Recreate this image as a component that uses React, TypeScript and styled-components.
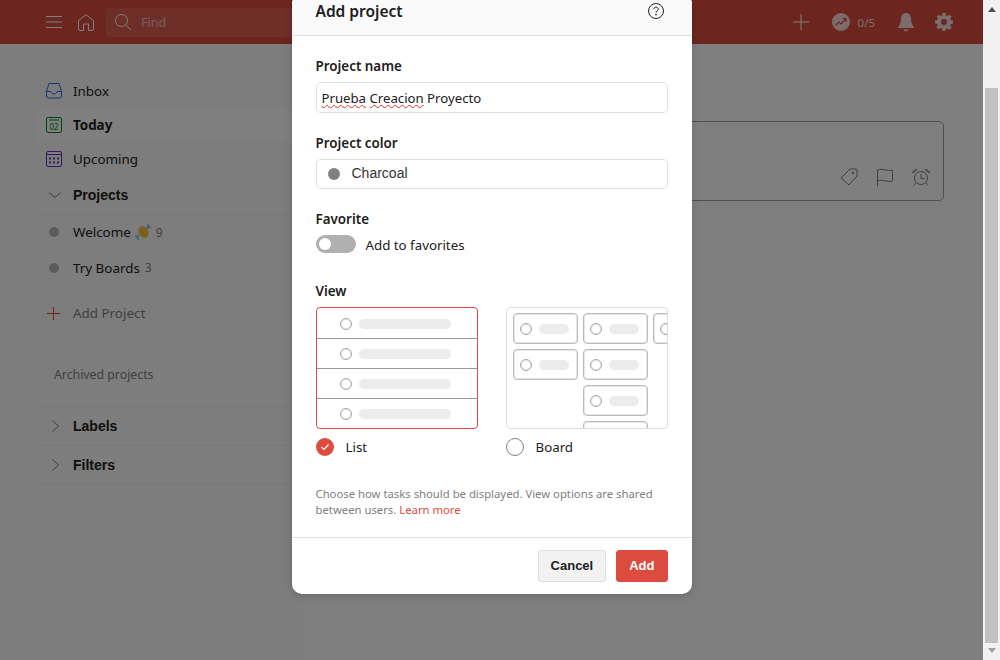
import React from 'react';
import styled, { createGlobalStyle } from 'styled-components';

const GlobalStyle = createGlobalStyle`
  html, body {
    margin: 0;
    height: 100%;
    overflow: hidden;
  }
  body {
    font-family: "Noto Sans", "Liberation Sans", sans-serif;
    font-size: 14px;
    color: #202020;
  }
`;

const Page = styled.div`
  display: flex;
  width: 1000px;
  height: 660px;
`;

const AppArea = styled.div`
  position: relative;
  flex: 1;
  display: flex;
  flex-direction: column;
  background: #fff;
  overflow: hidden;
`;

const TopBar = styled.header`
  height: 44px;
  flex: none;
  display: flex;
  align-items: center;
  padding: 0 30px 0 46px;
  background: #db4c3f;
  color: #fff;
`;

const BarIcon = styled.svg`
  flex: none;
  fill: none;
  stroke: #fff;
  stroke-width: 1;
`;

const HomeIcon = styled(BarIcon)`
  margin-left: 16px;
`;

const SearchBox = styled.div`
  width: 300px;
  height: 29px;
  margin-left: 12px;
  padding-left: 9px;
  display: flex;
  align-items: center;
  gap: 10px;
  border-radius: 3px;
  background: rgba(255, 255, 255, 0.1);
  font-size: 12.5px;
  color: rgba(255, 255, 255, 0.6);
`;

const BarSpacer = styled.div`
  flex: 1;
`;

const Karma = styled.div`
  display: flex;
  align-items: center;
  gap: 8px;
  margin-left: 23px;
  font-size: 11.5px;
  color: rgba(255, 255, 255, 0.8);
`;

const BellIcon = styled.svg`
  margin-left: 23px;
  fill: #fff;
  opacity: 0.8;
`;

const GearIcon = styled(BellIcon)`
  margin-left: 21px;
`;

const Content = styled.div`
  flex: 1;
  display: flex;
  min-height: 0;
`;

const Sidebar = styled.aside`
  width: 270px;
  padding: 30px 0 0 35px;
  background: #fafafa;
  color: #202020;
`;

const NavRow = styled.div<{ $active?: boolean }>`
  height: 34px;
  display: flex;
  align-items: center;
  gap: 11px;
  padding-left: 11px;
  border-radius: 3px;
  background: ${p => (p.$active ? '#fff' : 'transparent')};
  font-weight: ${p => (p.$active ? 700 : 400)};
  font-size: 13.4px;
`;

const SectionRow = styled.div<{ $height: number }>`
  height: ${p => p.$height}px;
  box-sizing: border-box;
  display: flex;
  align-items: center;
  gap: 11px;
  padding-left: 13px;
  border-bottom: 1px solid #f0f0f0;
  font-family: "Liberation Sans", sans-serif;
  font-weight: 700;
  font-size: 14px;
`;

const ProjectRow = styled.div<{ $height: number }>`
  height: ${p => p.$height}px;
  display: flex;
  align-items: center;
  padding-left: 14px;
  font-size: 13.4px;
`;

const ProjectDot = styled.span`
  width: 10px;
  height: 10px;
  margin-right: 14px;
  border-radius: 50%;
  background: #b8b8b8;
`;

const ProjectCount = styled.span`
  margin-left: 5px;
  font-size: 12px;
  color: #808080;
`;

const Wave = styled.svg`
  margin-left: 4px;
`;

const AddProjectRow = styled.div`
  height: 34px;
  margin-top: 10px;
  display: flex;
  align-items: center;
  gap: 13px;
  padding-left: 12px;
  font-size: 13.4px;
  color: #808080;
`;

const ArchivedRow = styled.div`
  height: 66px;
  box-sizing: border-box;
  padding: 2px 0 0 19px;
  margin-top: 11px;
  display: flex;
  align-items: center;
  border-bottom: 1px solid #f0f0f0;
  font-size: 12.3px;
  color: #808080;
`;

const Main = styled.main`
  flex: 1;
  padding: 77px 39px 0 39px;
`;

const QuickAdd = styled.div`
  height: 80px;
  padding: 0 13px 14px 10px;
  display: flex;
  align-items: flex-end;
  justify-content: flex-end;
  gap: 19px;
  box-sizing: border-box;
  border: 1px solid #a0a0a0;
  border-radius: 5px;
`;

const ActionIcon = styled.svg`
  fill: none;
  stroke: #808080;
  stroke-width: 1;
`;

const Overlay = styled.div`
  position: absolute;
  inset: 0;
  display: flex;
  align-items: flex-end;
  justify-content: center;
  padding-bottom: 66px;
  background: rgba(0, 0, 0, 0.5);
`;

const Modal = styled.div`
  width: 400px;
  height: 600px;
  flex: none;
  display: flex;
  flex-direction: column;
  background: #fff;
  border-radius: 10px;
  box-shadow: 0 2px 8px rgba(0, 0, 0, 0.16);
  overflow: hidden;
`;

const ModalHeader = styled.div`
  height: 42px;
  flex: none;
  display: flex;
  align-items: flex-end;
  justify-content: space-between;
  padding: 0 28px 13px 24px;
  box-sizing: border-box;
  background: #fafafa;
  border-bottom: 1px solid #ddd;
`;

const ModalTitle = styled.h1`
  margin: 0;
  font-size: 15.5px;
  line-height: 22px;
  font-weight: 600;
`;

const HelpIcon = styled.svg`
  margin-bottom: 3px;
  fill: none;
  stroke: #202020;
`;

const ModalBody = styled.div`
  flex: 1;
  padding: 0 24px;
  display: flex;
  flex-direction: column;
`;

const FieldLabel = styled.div<{ $top: number }>`
  margin-top: ${p => p.$top}px;
  font-size: 13.4px;
  line-height: 18px;
  font-weight: 600;
`;

const TextField = styled.div`
  margin-top: 7px;
  height: 31px;
  box-sizing: border-box;
  display: flex;
  align-items: center;
  padding: 0 5px;
  border: 1px solid #ddd;
  border-radius: 5px;
  font-size: 13.2px;
`;

const Misspelled = styled.span`
  text-decoration: underline wavy #e03030;
  text-decoration-thickness: 1px;
`;

const SelectField = styled(TextField)`
  height: 30px;
  padding: 0 0 3px 11px;
  gap: 12px;
  font-family: "Liberation Sans", sans-serif;
  font-size: 14px;
  color: #333;
`;

const ColorDot = styled.span`
  width: 12px;
  height: 12px;
  margin-top: 3px;
  border-radius: 50%;
  background: #808080;
`;

const ToggleRow = styled.div`
  margin-top: 7px;
  height: 19px;
  display: flex;
  align-items: center;
  gap: 10px;
  font-size: 13.3px;
`;

const ToggleTrack = styled.span`
  align-self: flex-start;
  width: 40px;
  height: 18px;
  border-radius: 9px;
  background: #b0b0b0;
  display: flex;
  align-items: center;
  padding-left: 3px;
  box-sizing: border-box;
`;

const ToggleKnob = styled.span`
  width: 12px;
  height: 12px;
  border-radius: 50%;
  background: #fff;
`;

const ViewGrid = styled.div`
  margin-top: 7px;
  display: grid;
  grid-template-columns: 162px 162px;
  column-gap: 28px;
`;

const ViewPreview = styled.div<{ $selected?: boolean }>`
  height: 122px;
  box-sizing: border-box;
  padding-top: ${p => (p.$selected ? 1 : 0)}px;
  border: 1px solid ${p => (p.$selected ? '#db4c3f' : '#ddd')};
  border-radius: 4px;
  overflow: hidden;
`;

const ListRow = styled.div`
  height: 30px;
  box-sizing: border-box;
  display: flex;
  align-items: center;
  gap: 7px;
  padding-left: 23px;
  border-bottom: 1px solid #999;

  &:last-child {
    border-bottom: none;
  }
`;

const PreviewCircle = styled.span`
  flex: none;
  width: 12px;
  height: 12px;
  box-sizing: border-box;
  border: 1px solid #a8a8a8;
  box-shadow: inset 0 0 0 1px rgba(168, 168, 168, 0.3);
  border-radius: 50%;
`;

const ListBar = styled.span`
  width: 92px;
  height: 10px;
  border-radius: 5px;
  background: #ececec;
`;

const BoardCanvas = styled.div`
  display: flex;
  gap: 5px;
  padding: 5px 0 0 6px;
`;

const BoardColumn = styled.div`
  flex: none;
  display: flex;
  flex-direction: column;
  gap: 5px;
`;

const BoardCard = styled.div`
  width: 65px;
  height: 31px;
  box-sizing: border-box;
  display: flex;
  align-items: center;
  gap: 7px;
  padding-left: 6px;
  border: 1px solid #bbb;
  box-shadow: inset 0 0 0 1px rgba(196, 196, 196, 0.4);
  border-radius: 4px;
`;

const BoardBar = styled.span`
  width: 30px;
  height: 10px;
  border-radius: 5px;
  background: #ececec;
`;

const ViewOption = styled.div`
  margin-top: 9px;
  display: flex;
  align-items: center;
  gap: 12px;
  font-size: 13.3px;
`;

const RadioChecked = styled.span`
  width: 18px;
  height: 18px;
  border-radius: 50%;
  background: #db4c3f;
  display: flex;
  align-items: center;
  justify-content: center;
`;

const RadioEmpty = styled.span`
  width: 18px;
  height: 18px;
  box-sizing: border-box;
  border: 1px solid #808080;
  border-radius: 50%;
`;

const HelpText = styled.p`
  margin: 30px 0 0;
  font-size: 11.3px;
  line-height: 16px;
  color: #808080;
`;

const LearnMore = styled.span`
  color: #db4c3f;
`;

const ModalFooter = styled.div`
  flex: none;
  height: 57px;
  box-sizing: border-box;
  display: flex;
  justify-content: flex-end;
  align-items: flex-start;
  gap: 10px;
  padding: 12px 24px 0;
  border-top: 1px solid #ddd;
`;

const FooterButton = styled.button<{ $primary?: boolean }>`
  height: 32px;
  padding: 0 12px 2px;
  border: 1px solid ${p => (p.$primary ? '#db4c3f' : '#ddd')};
  border-radius: 3px;
  background: ${p => (p.$primary ? '#db4c3f' : '#f2f2f2')};
  color: ${p => (p.$primary ? '#fff' : '#202020')};
  font-family: "Liberation Sans", sans-serif;
  font-size: 13px;
  font-weight: 700;
`;

const ScrollBar = styled.div`
  width: 17px;
  flex: none;
  display: flex;
  flex-direction: column;
  background: #f1f1f1;
`;

const ScrollArrow = styled.svg<{ $top: number }>`
  display: block;
  flex: none;
  margin: ${p => p.$top}px auto 0;
`;

const ScrollThumb = styled.div`
  height: 555px;
  margin: 76px 2px 0 2px;
  background: #c1c1c1;
`;

const Chevron = ({ right }: { right?: boolean }) => (
  <svg width="14" height="14" viewBox="0 0 14 14" fill="none" stroke="#808080">
    {right ? <path d="M4.5 1.5l6 5.5-6 5.5" /> : <path d="M1 4.5l6 5 6-5" />}
  </svg>
);

const BoardItem = () => (
  <BoardCard>
    <PreviewCircle />
    <BoardBar />
  </BoardCard>
);

export default function App() {
  return (
    <Page>
      <GlobalStyle />
      <AppArea>
        <TopBar>
          <BarIcon width="16" height="14" viewBox="0 0 16 14">
            <path d="M0 1.500h16M0 7h16M0 12.500h16" />
          </BarIcon>
          <HomeIcon width="16" height="17" viewBox="0 0 16 17">
            <path d="M.5 6.500L8 .7l7.500 5.800V15a1.500 1.500 0 0 1-1.500 1.500h-3.500V10h-5v6.500H2A1.500 1.500 0 0 1 .5 15z" />
          </HomeIcon>
          <SearchBox>
            <BarIcon width="16" height="16" viewBox="0 0 16 16">
              <circle cx="6.500" cy="6.500" r="6" />
              <path d="M11 11l5 5" />
            </BarIcon>
            Find
          </SearchBox>
          <BarSpacer />
          <BarIcon width="16" height="16" viewBox="0 0 16 16">
            <path d="M8 0v16M0 8h16" />
          </BarIcon>
          <Karma>
            <svg width="18" height="18" viewBox="0 0 18 18">
              <circle cx="9" cy="9" r="9" fill="#fff" opacity="0.8" />
              <path d="M3.500 12.500l3.500-3.500 2 2 4.500-5M10.500 5.500h3.500v3.500" fill="none" stroke="#db4c3f" strokeWidth="1.200" />
            </svg>
            0/5
          </Karma>
          <BellIcon width="16" height="19" viewBox="0 0 16 19">
            <path d="M8 0c3.200 0 5 2.600 5 5.500 0 4 1 6 3 8.500v1H0v-1c2-2.500 3-4.500 3-8.500C3 2.600 4.800 0 8 0z" />
            <path d="M5.500 16.500h5c-.5 1.300-1.500 2-2.500 2s-2-.7-2.500-2z" />
          </BellIcon>
          <GearIcon width="18" height="18" viewBox="0 0 24 24">
            <path
              fillRule="evenodd"
              d="M10 0h4l.6 3.300 2 .8L19.400 2.200l2.800 2.800-1.900 2.800.8 2 3.300.6v4l-3.300.6-.8 2 1.900 2.800-2.800 2.800-2.800-1.900-2 .8L14 24h-4l-.6-3.300-2-.8-2.800 1.900-2.800-2.800 1.900-2.800-.8-2L0 14v-4l3.300-.6.8-2L2.200 5 5 2.200l2.800 1.900 2-.8zM12 8a4 4 0 1 0 0 8 4 4 0 0 0 0-8z"
            />
          </GearIcon>
        </TopBar>
        <Content>
          <Sidebar>
            <NavRow>
              <svg width="16" height="16" viewBox="0 0 16 16" fill="none" stroke="#246fe0">
                <path d="M3 .5h10l2.500 8V13a2 2 0 0 1-2 2h-11a2 2 0 0 1-2-2V8.500zM.5 8.500H5c.5 2 1.500 2.500 3 2.500s2.500-.5 3-2.500h4.500" />
              </svg>
              Inbox
            </NavRow>
            <NavRow $active>
              <svg width="16" height="16" viewBox="0 0 16 16" fill="none">
                <rect x=".5" y=".5" width="15" height="15" rx="1.500" stroke="#058527" />
                <path d="M3 3h10" stroke="#058527" />
                <text x="8" y="13" textAnchor="middle" fontSize="8" fontWeight="400" fill="#058527">02</text>
              </svg>
              Today
            </NavRow>
            <NavRow>
              <svg width="16" height="16" viewBox="0 0 16 16" fill="none">
                <rect x=".5" y=".5" width="15" height="15" rx="1.500" stroke="#692fc2" />
                <path d="M1 3.500h14" stroke="#692fc2" />
                <path d="M3 6.500h2v2H3zM7 6.500h2v2H7zM11 6.500h2v2h-2zM3 10.500h2v2H3zM7 10.500h2v2H7zM11 10.500h2v2h-2z" fill="#692fc2" />
              </svg>
              Upcoming
            </NavRow>
            <SectionRow $height={39}>
              <Chevron />
              Projects
            </SectionRow>
            <ProjectRow $height={34}>
              <ProjectDot />
              Welcome
              <Wave width="16" height="16" viewBox="0 0 16 16">
                <ellipse cx="8.500" cy="8" rx="4.800" ry="6.300" transform="rotate(-30 8.500 8)" fill="#f7c63a" />
                <path d="M6 5.500l4.500 7" stroke="#e8a92a" fill="none" />
                <path d="M.8 11.500c.2 1.700 1.500 3.300 3.200 3.800M2.500 10.500c.2 1 .8 2 1.700 2.500M12 .8c1.600.4 2.900 1.700 3.300 3.400M11.500 2.800c1 .2 1.800 1 2 2" stroke="#5dadec" fill="none" strokeWidth="1.200" />
              </Wave>
              <ProjectCount>9</ProjectCount>
            </ProjectRow>
            <ProjectRow $height={37}>
              <ProjectDot />
              Try Boards
              <ProjectCount>3</ProjectCount>
            </ProjectRow>
            <AddProjectRow>
              <svg width="13" height="13" viewBox="0 0 13 13" fill="none" stroke="#e44332">
                <path d="M6.500 0v13M0 6.500h13" />
              </svg>
              Add Project
            </AddProjectRow>
            <ArchivedRow>Archived projects</ArchivedRow>
            <SectionRow $height={39}>
              <Chevron right />
              Labels
            </SectionRow>
            <SectionRow $height={39}>
              <Chevron right />
              Filters
            </SectionRow>
          </Sidebar>
          <Main>
            <QuickAdd>
              <ActionIcon width="18" height="18" viewBox="0 0 18 18">
                <path d="M10 1h6a1 1 0 0 1 1 1v6l-8 9-8-7z" />
                <circle cx="13" cy="5" r=".8" fill="#808080" />
              </ActionIcon>
              <ActionIcon width="16" height="18" viewBox="0 0 16 18">
                <path d="M.5 18V2c5-2.500 10 2 15 0v11c-5 2-10-2.500-15 0" />
              </ActionIcon>
              <ActionIcon width="18" height="18" viewBox="0 0 18 18">
                <circle cx="9" cy="10" r="6.500" />
                <path d="M9 6v4.500h3.500M.7 5C.7 2.500 3 1 5 2zM17.300 5c0-2.500-2.300-4-4.300-3zM3.500 15l-1.500 2.500M14.500 15l1.500 2.500" />
              </ActionIcon>
            </QuickAdd>
          </Main>
        </Content>
        <Overlay>
          <Modal>
            <ModalHeader>
              <ModalTitle>Add project</ModalTitle>
              <HelpIcon width="16" height="16" viewBox="0 0 16 16">
                <circle cx="8" cy="8" r="7.500" />
                <path d="M5.800 6.200C5.800 5 6.800 4.200 8 4.200s2.200.8 2.200 2c0 1.800-2.200 1.700-2.200 3.500" />
                <circle cx="8" cy="11.700" r=".5" />
              </HelpIcon>
            </ModalHeader>
            <ModalBody>
              <FieldLabel $top={21}>Project name</FieldLabel>
              <TextField>
                <span>
                  <Misspelled>Prueba</Misspelled> <Misspelled>Creacion</Misspelled> Proyecto
                </span>
              </TextField>
              <FieldLabel $top={21}>Project color</FieldLabel>
              <SelectField>
                <ColorDot />
                Charcoal
              </SelectField>
              <FieldLabel $top={21}>Favorite</FieldLabel>
              <ToggleRow>
                <ToggleTrack>
                  <ToggleKnob />
                </ToggleTrack>
                Add to favorites
              </ToggleRow>
              <FieldLabel $top={28}>View</FieldLabel>
              <ViewGrid>
                <div>
                  <ViewPreview $selected>
                    {[0, 1, 2, 3].map(i => (
                      <ListRow key={i}>
                        <PreviewCircle />
                        <ListBar />
                      </ListRow>
                    ))}
                  </ViewPreview>
                  <ViewOption>
                    <RadioChecked>
                      <svg width="10" height="8" viewBox="0 0 10 8" fill="none" stroke="#fff" strokeWidth="1.200">
                        <path d="M1.500 4l2.500 2.500 4.500-5" />
                      </svg>
                    </RadioChecked>
                    List
                  </ViewOption>
                </div>
                <div>
                  <ViewPreview>
                    <BoardCanvas>
                      <BoardColumn>
                        <BoardItem />
                        <BoardItem />
                      </BoardColumn>
                      <BoardColumn>
                        <BoardItem />
                        <BoardItem />
                        <BoardItem />
                        <BoardItem />
                      </BoardColumn>
                      <BoardColumn>
                        <BoardItem />
                      </BoardColumn>
                    </BoardCanvas>
                  </ViewPreview>
                  <ViewOption>
                    <RadioEmpty />
                    Board
                  </ViewOption>
                </div>
              </ViewGrid>
              <HelpText>
                Choose how tasks should be displayed. View options are shared between users.{' '}
                <LearnMore>Learn more</LearnMore>
              </HelpText>
            </ModalBody>
            <ModalFooter>
              <FooterButton>Cancel</FooterButton>
              <FooterButton $primary>Add</FooterButton>
            </ModalFooter>
          </Modal>
        </Overlay>
      </AppArea>
      <ScrollBar>
        <ScrollArrow $top={7} width="8" height="5" viewBox="0 0 8 5">
          <path d="M4 0l4 5H0z" fill="#505050" />
        </ScrollArrow>
        <ScrollThumb />
        <ScrollArrow $top={5} width="8" height="5" viewBox="0 0 8 5">
          <path d="M0 0h8L4 5z" fill="#a0a0a0" />
        </ScrollArrow>
      </ScrollBar>
    </Page>
  );
}
